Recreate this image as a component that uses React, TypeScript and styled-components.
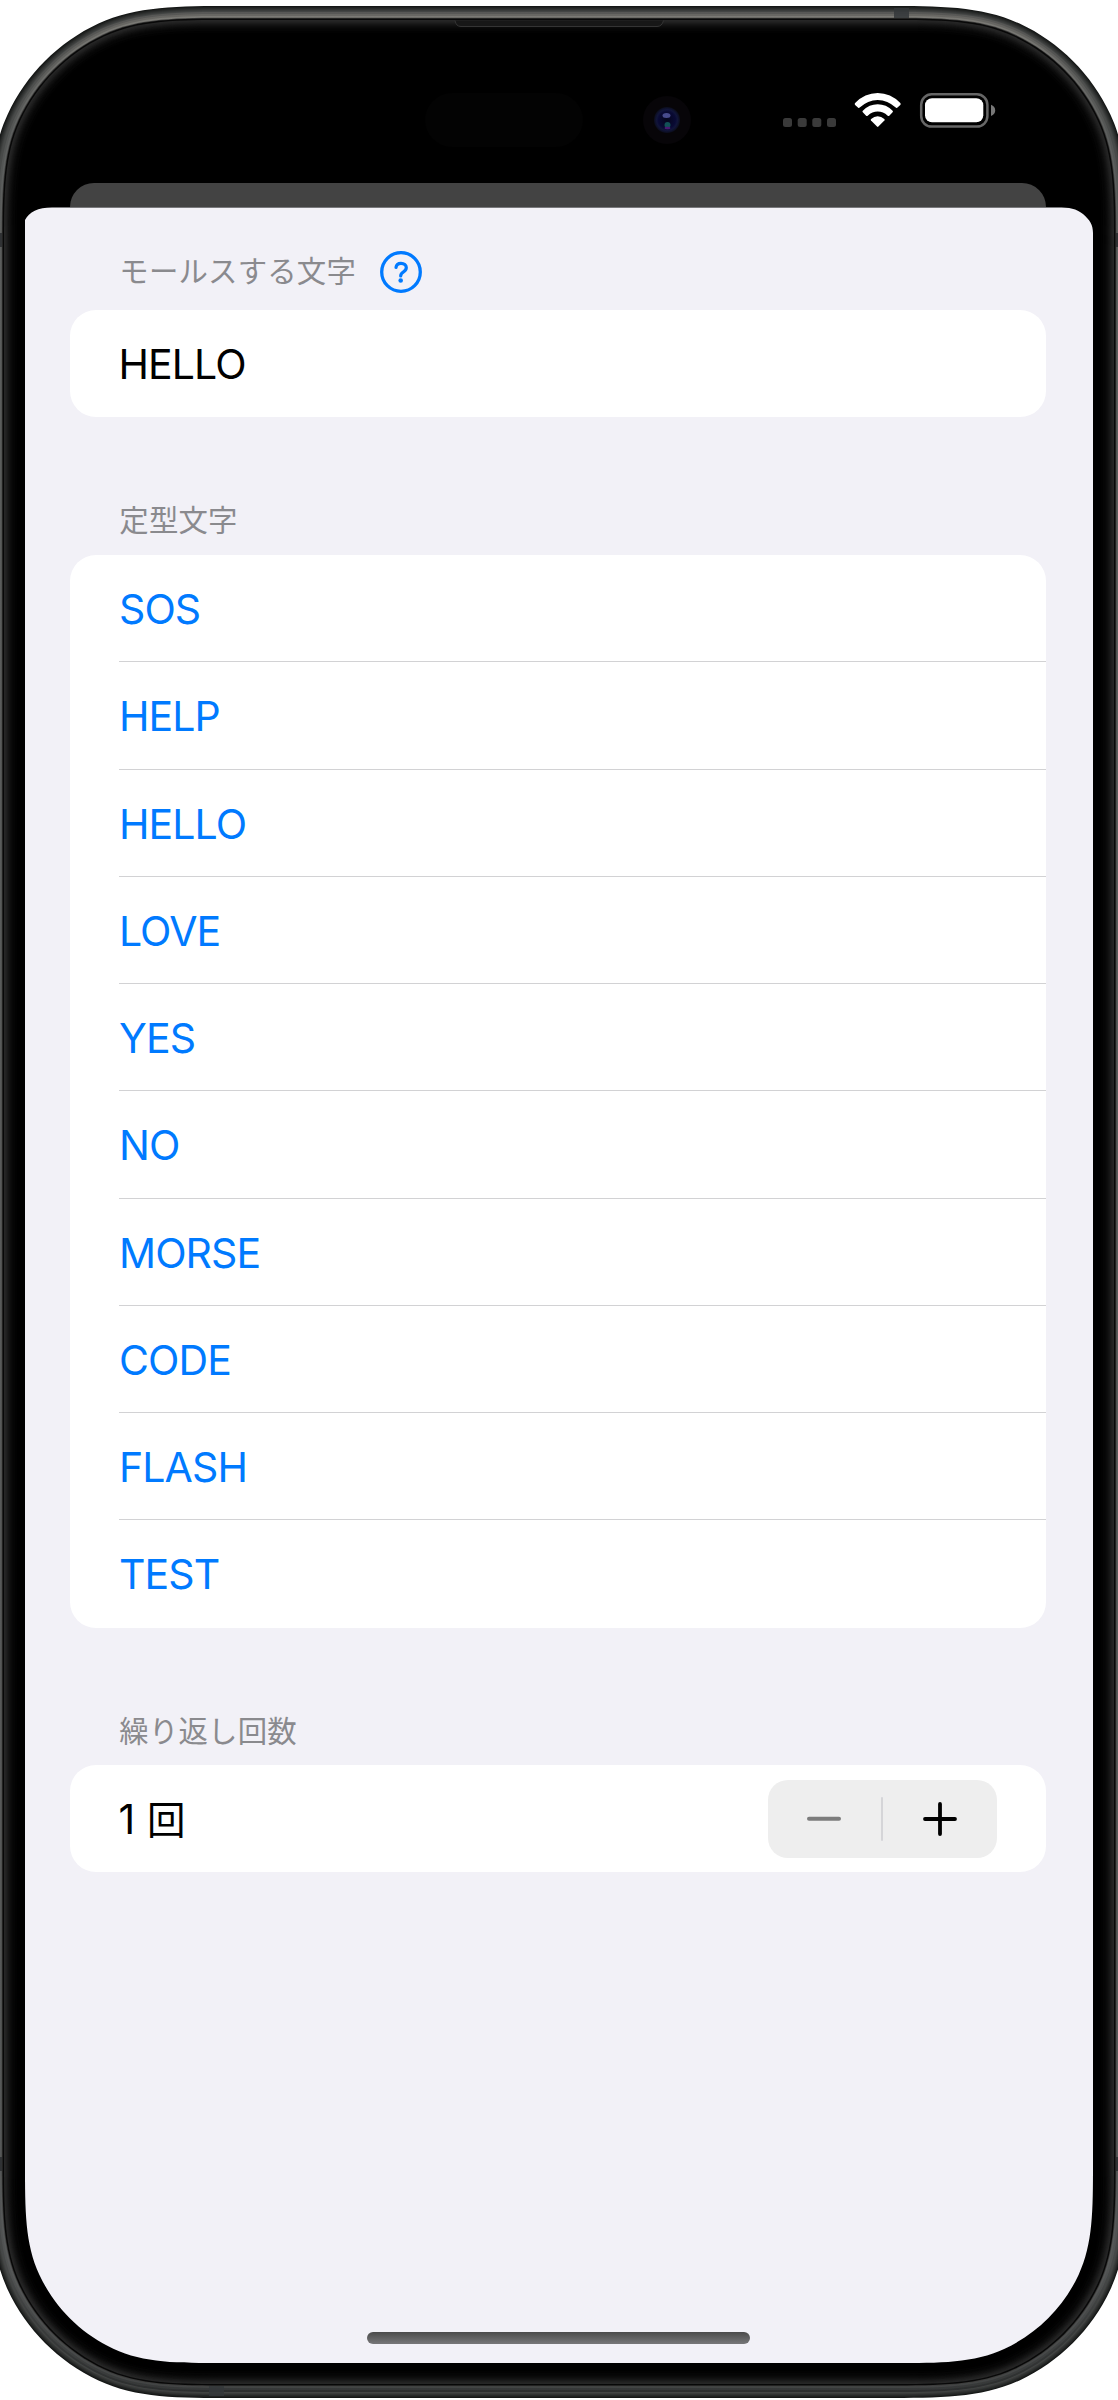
import React, { useState } from "react";
import styled, { createGlobalStyle } from "styled-components";

const corner = (r: number, points: number[][], sx: number, sy: number, x: number, y: number) =>
  points.map(([a, b]) => `${(x + sx * a * r).toFixed(2)} ${(y + sy * b * r).toFixed(2)}`);

/* A 40 degree arc in the middle, eased into the straight edges on both sides. */
const OUT = [[1.3, 0], [1, 0], [0.778, 0], [0.577, 0.0937], [0.3639, 0.1931], [0.1931, 0.3639], [0.0937, 0.577], [0, 0.778], [0, 1], [0, 1.3]];
const BACK = [...OUT].reverse();

const cornerPath = (p: string[]) =>
  `${p[0]} C${p[1]} ${p[2]} ${p[3]} C${p[4]} ${p[5]} ${p[6]} C${p[7]} ${p[8]} ${p[9]}`;

const squircle = (x: number, y: number, w: number, h: number, r: number) =>
  [
    "M" + cornerPath(corner(r, BACK, 1, 1, x, y)),
    "L" + cornerPath(corner(r, OUT, -1, 1, x + w, y)),
    "L" + cornerPath(corner(r, BACK, -1, -1, x + w, y + h)),
    "L" + cornerPath(corner(r, OUT, 1, -1, x, y + h)),
  ].join(" ") + "Z";

const GlobalStyle = createGlobalStyle`
  body { margin: 0; background: #fff; }
  * { box-sizing: border-box; }
`;

const Device = styled.main`
  position: relative;
  width: 1118px;
  height: 2400px;
  overflow: hidden;
  display: flex;
  flex-direction: column;
  padding: 6px 25px 0;
  font-family: Inter, "Noto Sans CJK JP", sans-serif;
`;

const BezelArt = styled.svg`
  position: absolute;
  inset: 0;
`;

const StatusBar = styled.header`
  position: relative;
  height: 177px;
  flex: none;
  display: flex;
  justify-content: flex-end;
  padding: 86px 97px 0 0;
`;

const StatusIcons = styled.svg`
  display: block;
  width: 214px;
  height: 38px;
`;

const BackSheet = styled.div`
  position: relative;
  flex: none;
  height: 24px;
  margin: 0 47.5px 0 45px;
  background: #434343;
  border-radius: 24px 24px 0 0;
`;

const Sheet = styled.section`
  position: relative;
  flex: none;
  width: 1068px;
  height: 2156px;
  padding: 30px 47.5px 0 45px;
  display: flex;
  flex-direction: column;
  background: #f2f1f7;
  clip-path: path("${"M0 13C4 5 13 0.5 27 0.5L1032 0.5C1045 0.5 1051 1.5 1058 7C1065 13 1068 18 1068 26L" +
    cornerPath(corner(153, BACK, -1, -1, 1068, 2156)) + "L" + cornerPath(corner(153, OUT, 1, -1, 0, 2156)) + "Z"}");
`;

const SectionHead = styled.div<{ $h: number; $drop?: number; $lift?: number }>`
  flex: none;
  display: flex;
  align-items: center;
  gap: 24px;
  height: ${(p) => p.$h}px;
  padding: ${(p) => p.$drop ?? 0}px 0 ${(p) => p.$lift ?? 0}px 49.3px;
  color: #8a8a8e;
  font: 400 29.4px/44px "Noto Sans CJK JP", sans-serif;
  letter-spacing: 0.2px;
`;

const HelpButton = styled.button`
  width: 42px;
  height: 42px;
  margin-top: 6px;
  padding: 0;
  border: 0;
  background: none;
  svg { display: block; }
`;

const Card = styled.div`
  flex: none;
  background: #fff;
  border-radius: 26px;
  overflow: hidden;
`;

const rowText = `
  height: 107.25px;
  font-family: Inter, "Noto Sans CJK JP", sans-serif;
  font-size: 41px;
  font-weight: 400;
  line-height: 50px;
  letter-spacing: -0.9px;
`;

const TextField = styled.input`
  ${rowText}
  display: block;
  width: 100%;
  padding: 1px 0 0 48.5px;
  border: 0;
  outline: 0;
  background: none;
  color: #000;
`;

const PhraseList = styled.ul`
  list-style: none;
  margin: 0;
  padding: 0 0 0 49px;
`;

const Phrase = styled.li`
  height: 107.25px;
  & + & { box-shadow: 0 -1px 0 #d2d2d4; }
`;

const PhraseButton = styled.button`
  ${rowText}
  display: block;
  width: 100%;
  padding: 1px 0 0;
  border: 0;
  background: none;
  color: #007aff;
  text-align: left;
`;

const CountRow = styled.div`
  ${rowText}
  display: flex;
  align-items: center;
  justify-content: space-between;
  padding: 0 49px 0 48.5px;
`;

const Count = styled.span`
  padding-top: 2px;
  color: #000;
`;

const Unit = styled.span`
  margin-left: 2px;
  font-size: 38.5px;
`;

const Stepper = styled.div`
  display: flex;
  align-items: center;
  width: 229px;
  height: 78px;
  border-radius: 20px;
  background: #eeeeee;
`;

const StepButton = styled.button<{ $dim?: boolean }>`
  flex: 1;
  height: 100%;
  display: flex;
  align-items: center;
  justify-content: center;
  padding: 0;
  border: 0;
  background: none;
  color: ${(p) => (p.$dim ? "#7c7c7c" : "#000")};
`;

const StepDivider = styled.span`
  width: 2.5px;
  height: 44px;
  border-radius: 2px;
  background: #d5d5d8;
`;

const HomeIndicator = styled.div`
  width: 383px;
  height: 12px;
  margin: auto auto 19px 296.5px;
  border-radius: 6px;
  background: linear-gradient(#4b4b4b, #777779);
`;

/* Concentric layers from the outer edge of the frame to the glass. */
const rim = [
  [0, "#151716"], [1, "#1f2120"], [2, "#282a29"], [3, "#313332"], [4, "#3a3c3b"], [5, "#434544"],
  [6, "url(#metalLow)"], [8, "url(#metal)"], [10, "url(#metalHi)"], [11.7, "#3c3c3b"], [12.5, "#080808"],
  [14, "#262626"], [15, "#232323"], [16, "#1f1f1f"], [17, "#1a1a1a"], [18, "#151515"], [19, "#111"],
  [20, "#0d0d0d"], [21, "#0a0a0a"], [22, "#070707"], [23, "#050505"], [25, "#020202"], [27, "#000"],
] as const;

const metals = [
  ["metalLow", "#585856", "#484a49", "#464848", "#2c2e2e"],
  ["metal", "#686763", "#535554", "#505252", "#363838"],
  ["metalHi", "#7b7a75", "#5c5e5d", "#565858", "#424444"],
];

const Bezel = () => (
  <BezelArt width="1118" height="2400" viewBox="0 0 1118 2400" aria-hidden>
    <defs>
      {metals.map(([id, a, b, c, d]) => (
        <linearGradient key={id} id={id} x1="0" y1="0" x2="0" y2="1">
          <stop offset="0" stopColor={a} />
          <stop offset="0.05" stopColor={b} />
          <stop offset="0.95" stopColor={c} />
          <stop offset="1" stopColor={d} />
        </linearGradient>
      ))}
      <radialGradient id="lens">
        <stop offset="0" stopColor="#05051c" />
        <stop offset="0.65" stopColor="#090a34" />
        <stop offset="0.8" stopColor="#11153a" />
        <stop offset="1" stopColor="#0b0d1c" />
      </radialGradient>
    </defs>
    {rim.map(([d, fill]) => (
      <path key={d} fill={fill} d={squircle(-10 + d, 6 + d, 1138 - 2 * d, 2392 - 2 * d, 188 - d)} />
    ))}
    <path d="M894 8H909V18H894ZM209 2386H224V2396H209Z" fill="#34373a" fillOpacity="0.85" />
    <path d="M0 233H2V247H0ZM1116 233H1118V247H1116ZM0 2157H2V2171H0ZM1116 2157H1118V2171H1116Z" fill="#303234" />
    <path d="M455 20.5Q456 26.5 461 26.5H657Q662 26.5 663.500 20.5" fill="#171717" stroke="#343434" />
    <rect x="425" y="93" width="158" height="54" rx="27" fill="#030303" />
    <circle cx="667" cy="120" r="24" fill="#070508" />
    <circle cx="667" cy="120" r="13" fill="url(#lens)" />
    <ellipse cx="666.500" cy="115.500" rx="4" ry="2.500" fill="#474b8d" />
    <circle cx="667.500" cy="125" r="3" fill="#125057" />
    <ellipse cx="667.500" cy="128" rx="3" ry="1.300" fill="#4a1872" />
  </BezelArt>
);

const SignalArt = () => (
  <StatusIcons viewBox="782 92 214 38" aria-hidden>
    {[783, 797.7, 812.3, 827].map((x) => (
      <rect key={x} x={x} y="118" width="9" height="9" rx="2.5" fill="#3a3a3a" />
    ))}
    <g transform="translate(877.7 0)" fill="#fff">
      <path d="M-22.600 103Q-13 93 0 93T22.600 103Q23.500 104 22.600 105L19.500 107.800Q18.700 108.300 18 107.600Q10 99.900 0 99.900T-18 107.600Q-18.700 108.300-19.500 107.800L-22.600 105Q-23.500 104-22.600 103Z" />
      <path d="M-14.900 110.700Q-8.500 104.300 0 104.300T14.900 110.700Q15.700 111.500 14.900 112.300L11.600 115.700Q10.800 116.400 10 115.700Q5.500 111.600 0 111.600T-10 115.700Q-10.800 116.400-11.600 115.700L-14.900 112.300Q-15.700 111.500-14.900 110.700Z" />
      <path d="M-6.600 119Q-3.500 116.300 0 116.300T6.600 119Q7.400 119.700 6.700 120.500L.7 126.600Q0 127.300-.7 126.600L-6.700 120.500Q-7.400 119.700-6.600 119Z" />
    </g>
    <rect x="921.200" y="94.200" width="66.200" height="32.400" rx="10.500" fill="none" stroke="#666" strokeWidth="2.500" />
    <rect x="925" y="98.300" width="58.300" height="24" rx="7" fill="#fff" />
    <path d="M991 104.800Q995.200 106.500 995.200 110.400T991 116Z" fill="#777" />
  </StatusIcons>
);

const PHRASES = ["SOS", "HELP", "HELLO", "LOVE", "YES", "NO", "MORSE", "CODE", "FLASH", "TEST"];

export default function App() {
  const [text, setText] = useState("HELLO");
  const [count, setCount] = useState(1);
  return (
    <>
      <GlobalStyle />
      <Device>
        <Bezel />
        <StatusBar><SignalArt /></StatusBar>
        <BackSheet />
        <Sheet>
          <SectionHead $h={73} $lift={9}>
            モールスする文字
            <HelpButton aria-label="help">
              <svg width="42" height="42" viewBox="0 0 42 42" fill="none" stroke="#007aff" strokeLinecap="round">
                <circle cx="21" cy="21" r="19.300" strokeWidth="3.300" />
                <path d="M16 16.500C16.300 13.700 18.200 12.300 21 12.300C24.100 12.300 26.300 14 26.300 16.600C26.300 18.600 25.300 19.800 23.500 20.900C21.700 22 20.700 22.900 20.700 25" strokeWidth="3.200" />
                <circle cx="20.700" cy="29.500" r="2.300" fill="#007aff" stroke="none" />
              </svg>
            </HelpButton>
          </SectionHead>
          <Card>
            <TextField value={text} onChange={(e) => setText(e.target.value)} />
          </Card>
          <SectionHead $h={137.75} $drop={64}>定型文字</SectionHead>
          <Card>
            <PhraseList>
              {PHRASES.map((p) => (
                <Phrase key={p}><PhraseButton onClick={() => setText(p)}>{p}</PhraseButton></Phrase>
              ))}
            </PhraseList>
          </Card>
          <SectionHead $h={137.5} $drop={65.5}>繰り返し回数</SectionHead>
          <Card>
            <CountRow>
              <Count>{count} <Unit>回</Unit></Count>
              <Stepper>
                <StepButton $dim={count === 1} onClick={() => setCount(Math.max(1, count - 1))}>
                  <svg width="34" height="34" viewBox="0 0 34 34" stroke="currentColor" strokeWidth="4" strokeLinecap="round"><path d="M2 16.700H32" /></svg>
                </StepButton>
                <StepDivider />
                <StepButton onClick={() => setCount(count + 1)}>
                  <svg width="34" height="34" viewBox="0 0 34 34" stroke="currentColor" strokeWidth="3.8" strokeLinecap="round"><path d="M2 17H32M17 2V32" /></svg>
                </StepButton>
              </Stepper>
            </CountRow>
          </Card>
          <HomeIndicator />
        </Sheet>
      </Device>
    </>
  );
}
